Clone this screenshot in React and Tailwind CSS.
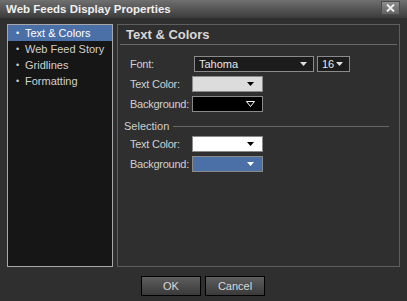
import React from 'react';

function Arrow({ color = '#ffffff', outline = false }) {
  return (
    <svg width="9" height="6" viewBox="0 0 9 6" className="shrink-0">
      {outline ? (
        <path d="M0.5 0.5 L8.5 0.5 L4.5 5.5 Z" fill="none" stroke={color} strokeWidth="1" />
      ) : (
        <path d="M1 1 L8 1 L4.5 5 Z" fill={color} />
      )}
    </svg>
  );
}

function Select({ value, width }) {
  return (
    <div className={`h-[16px] ${width} border border-[#8a8a8a] bg-[#1c1c1c] flex items-center justify-between pl-[4px] pr-[6px] text-[#e6e6e6]`}>
      <span className="whitespace-nowrap">{value}</span>
      <svg width="7" height="4" viewBox="0 0 7 4" className="shrink-0"><path d="M0 0 L7 0 L3.5 4 Z" fill="#e0e0e0" /></svg>
    </div>
  );
}

function Swatch({ bg, arrow, outline }) {
  return (
    <div className={`h-[16px] w-[71px] border border-[#8a8a8a] ${bg} flex items-center justify-end pr-[7px]`}>
      <Arrow color={arrow} outline={outline} />
    </div>
  );
}

function Row({ label, children, labelW = 'w-[62px]' }) {
  return (
    <div className="flex items-center h-[16px]">
      <span className={`${labelW} shrink-0 whitespace-nowrap tracking-[-0.25px] text-[#cfcfcf]`}>{label}</span>
      {children}
    </div>
  );
}

export default function App() {
  const items = ['Text & Colors', 'Web Feed Story', 'Gridlines', 'Formatting'];
  return (
    <div className="w-[407px] h-[301px] bg-[#2f2f2f] flex flex-col text-[11px] leading-[16px] text-[#d4d4d4]" style={{ fontFamily: '"Liberation Sans", Arial, sans-serif' }}>
      <div className="h-[18px] bg-gradient-to-b from-[#707070] to-[#3c3c3c] flex items-center justify-between pl-[6px] pr-[7px]">
        <span className="font-bold text-[11.5px] text-[#f0f0f0] whitespace-nowrap">Web Feeds Display Properties</span>
        <div className="w-[19px] h-[14px] mt-[-2px] border border-[#4a4a4a] bg-gradient-to-b from-[#8c8c8c] to-[#626262] flex items-center justify-center">
          <svg width="9" height="8" viewBox="0 0 9 8"><path d="M1 0.5 L8 7.5 M8 0.5 L1 7.5" stroke="#eeeeee" strokeWidth="2" /></svg>
        </div>
      </div>

      <div className="flex gap-[4px] pl-[7px] pt-[6px]">
        <div className="w-[106px] h-[243px] border border-[#a8a8a8] bg-[#161616] flex flex-col">
          {items.map((it, i) => (
            <div key={it} className={`h-[16px] flex items-center pl-[8px] whitespace-nowrap ${i === 0 ? 'bg-[#4b70a8] text-white' : 'text-[#d0d0d0]'}`}>
              <span className="w-[9px] text-[9px]">•</span>
              <span>{it}</span>
            </div>
          ))}
        </div>

        <div className="w-[283px] h-[243px] border border-[#5e5e5e] bg-[#2f2f2f] pl-[2px] pr-[2px] flex flex-col">
          <div className="h-[20px] border-b border-[#6a6a6a] flex items-end pl-[6px] pb-[1px]">
            <span className="font-bold text-[13px] text-[#d8d8d8] whitespace-nowrap">Text &amp; Colors</span>
          </div>

          <div className="flex flex-col gap-[4px] pl-[10px] mt-[11px]">
            <Row label="Font:" labelW="w-[64px]">
              <Select value="Tahoma" width="w-[120px]" />
              <div className="w-[3px]" />
              <Select value="16" width="w-[33px]" />
            </Row>
            <Row label="Text Color:">
              <Swatch bg="bg-[#dcdcdc]" arrow="#000000" />
            </Row>
            <Row label="Background:">
              <Swatch bg="bg-black" arrow="#ffffff" outline />
            </Row>
          </div>

          <div className="flex items-center pl-[4px] pr-[8px] mt-[6px] h-[16px]">
            <span className="text-[#cfcfcf]">Selection</span>
            <div className="flex-1 h-px bg-[#666666] ml-[4px]" />
          </div>

          <div className="flex flex-col gap-[4px] pl-[10px] mt-[2px]">
            <Row label="Text Color:">
              <Swatch bg="bg-white" arrow="#000000" />
            </Row>
            <Row label="Background:">
              <Swatch bg="bg-[#4b70a8]" arrow="#ffffff" />
            </Row>
          </div>
        </div>
      </div>

      <div className="flex justify-start gap-[4px] pl-[141px] mt-[9px]">
        <button className="w-[60px] h-[20px] border border-black bg-gradient-to-b from-[#5e5e5e] to-[#3a3a3a] text-[#d8d8d8]">OK</button>
        <button className="w-[60px] h-[20px] border border-black bg-gradient-to-b from-[#5e5e5e] to-[#3a3a3a] text-[#d8d8d8]">Cancel</button>
      </div>
    </div>
  );
}
